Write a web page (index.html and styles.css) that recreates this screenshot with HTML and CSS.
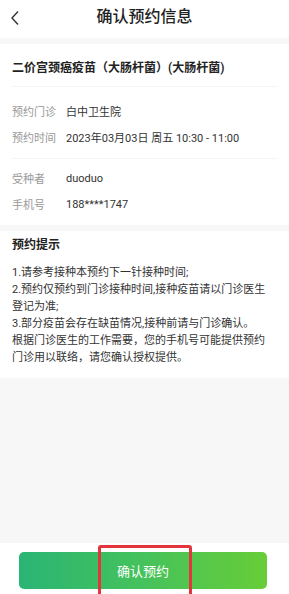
FILE: index.html
```html
<!DOCTYPE html>
<html lang="zh-CN">
<head>
<meta charset="utf-8">
<title>确认预约信息</title>
<link rel="stylesheet" href="styles.css">
</head>
<body>
<div class="page">
  <header class="header">
    <svg class="back" width="10" height="16" viewBox="0 0 10 16"><polyline points="8,1.5 2,8 8,14.5" fill="none" stroke="#333" stroke-width="1.4"/></svg>
    <h1 class="title">确认预约信息</h1>
  </header>
  <main class="main">
    <section class="card">
      <div class="vaccine">二价宫颈癌疫苗（大肠杆菌）(大肠杆菌)</div>
      <div class="group g1">
        <div class="row"><span class="label">预约门诊</span><span class="value">白中卫生院</span></div>
        <div class="row"><span class="label">预约时间</span><span class="value">2023年03月03日 周五 10:30 - 11:00</span></div>
      </div>
      <div class="group g2">
        <div class="row"><span class="label">受种者</span><span class="value">duoduo</span></div>
        <div class="row"><span class="label">手机号</span><span class="value">188****1747</span></div>
      </div>
    </section>
    <section class="card tips">
      <div class="tips-title">预约提示</div>
      <p class="tips-text">1.请参考接种本预约下一针接种时间;<br>2.预约仅预约到门诊接种时间,接种疫苗请以门诊医生登记为准;<br>3.部分疫苗会存在缺苗情况,接种前请与门诊确认。<br>根据门诊医生的工作需要，您的手机号可能提供预约门诊用以联络，请您确认授权提供。</p>
    </section>
  </main>
  <footer class="footer">
    <button class="confirm">确认预约</button>
    <div class="mark"></div>
  </footer>
</div>
</body>
</html>
```
FILE: styles.css
```css
html, body {
  margin: 0;
  padding: 0;
}
body {
  font-family: Roboto, "Noto Sans CJK SC", sans-serif;
  background: #f7f7f7;
  color: #333;
}
.page {
  height: 594px;
  display: flex;
  flex-direction: column;
  overflow: hidden;
}
.header {
  height: 38px;
  background: #fff;
  display: flex;
  align-items: center;
  justify-content: center;
  position: relative;
  flex-shrink: 0;
}
.back {
  position: absolute;
  left: 10px;
  top: 10px;
}
.title {
  margin: 0;
  font-size: 16px;
  font-weight: 500;
  color: #222;
  line-height: 20px;
  margin-top: -4px;
}
.main {
  flex: 1;
  display: flex;
  flex-direction: column;
  gap: 6px;
  padding-top: 6px;
}
.card {
  background: #fff;
  padding: 0 12px;
}
.vaccine {
  font-size: 12px;
  font-weight: 600;
  line-height: 16px;
  padding: 16px 0 10px;
  color: #222;
  border-bottom: 1px solid #f4f4f4;
}
.group {
  display: flex;
  flex-direction: column;
}
.g1 {
  padding: 11px 0 8px;
  border-bottom: 1px solid #f4f4f4;
}
.g2 {
  padding: 6px 0 8px;
}
.row {
  display: flex;
  height: 26px;
  align-items: center;
  font-size: 11px;
}
.label {
  width: 54px;
  color: #999;
}
.value {
  color: #333;
}
.tips {
  padding-top: 6px;
  padding-bottom: 12px;
}
.tips-title {
  font-size: 12px;
  font-weight: 600;
  line-height: 17px;
  color: #222;
}
.tips-text {
  margin: 10px 0 0;
  max-width: 258px;
  font-size: 11px;
  line-height: 17px;
  color: #333;
}
.footer {
  height: 51px;
  background: #fff;
  flex-shrink: 0;
  position: relative;
  padding: 9px 22px 0 19px;
  box-sizing: border-box;
}
.confirm {
  width: 100%;
  height: 37px;
  border: none;
  border-radius: 5px;
  background: linear-gradient(90deg, #2ab574 0%, #45c25c 50%, #68cd38 100%);
  color: #fff;
  font-family: inherit;
  font-size: 13px;
  display: block;
}
.mark {
  position: absolute;
  left: 98px;
  top: 2px;
  width: 94px;
  height: 70px;
  border: 3px solid #e4353f;
  border-radius: 3px;
  box-sizing: border-box;
}
```
